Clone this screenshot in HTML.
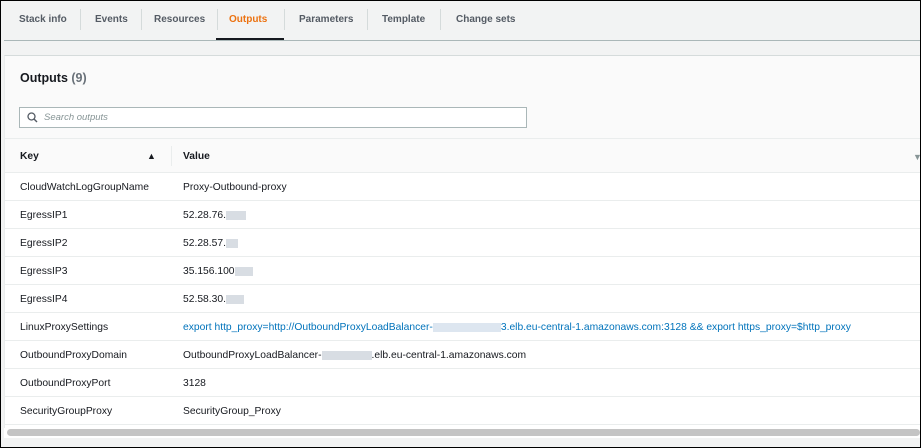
<!DOCTYPE html>
<html><head><meta charset="utf-8"><style>
*{box-sizing:border-box;margin:0;padding:0}
body{width:921px;height:448px;overflow:hidden;background:#f2f3f3;font-family:"Liberation Sans",sans-serif;font-size:11px;color:#16191f;position:relative}
.frame{position:absolute;left:0;top:0;width:921px;height:448px;border:1px solid #000;pointer-events:none;z-index:9}
.tabs{position:absolute;left:4px;top:0;right:0;height:41px;border-bottom:1px solid #aab7b8}
.tab{position:absolute;top:0;height:40px;line-height:40px;font-weight:bold;color:#545b64;font-size:10px}
.sep{position:absolute;top:9px;width:1px;height:21px;background:#d5dbdb}
.panel{position:absolute;left:4px;top:55px;width:930px;height:383px;background:#fff;border-top:1px solid #d5dbdb;border-left:1px solid #eaeded}
.head{position:absolute;left:0;top:0;right:0;height:82px;background:#fafafa}
h2{position:absolute;left:15px;top:15px;font-size:12.5px;font-weight:bold}
h2 span{color:#687078}
.search{position:absolute;left:14px;top:51px;width:508px;height:21px;border:1px solid #aab7b8;background:#fff;font-style:italic;color:#879596;font-size:9.5px;line-height:19px;padding-left:24px}
.search svg{position:absolute;left:7px;top:4px}
.thead{position:absolute;left:0;top:82px;right:0;height:35px;background:#fafafa;border-top:1px solid #eaeded;border-bottom:1px solid #eaeded;font-weight:bold;font-size:10.3px}
.row{position:absolute;left:0;right:0;height:28px;border-bottom:1px solid #eaeded;line-height:30px;font-size:10.3px}
.k{position:absolute;left:15px}.v{position:absolute;left:178px;white-space:nowrap}
.blur{display:inline-block;height:9px;background:#d8dde3;vertical-align:middle}
.lnk{color:#0073bb}
.sb{position:absolute;left:4px;top:428px;width:916px;height:10px;background:#fff}
.sb div{position:absolute;left:3px;top:1px;right:0;height:7px;background:#c4c4c4;border-radius:4px}
</style></head><body>
<div class="tabs">
<div class="tab" style="left:15px">Stack info</div><div class="sep" style="left:76px"></div>
<div class="tab" style="left:91px">Events</div><div class="sep" style="left:137px"></div>
<div class="tab" style="left:150px">Resources</div><div class="sep" style="left:213px"></div>
<div class="tab" style="left:225px;color:#ec7211">Outputs</div><div style="position:absolute;left:212px;top:38px;width:68px;height:2px;background:#16191f"></div><div class="sep" style="left:280px"></div>
<div class="tab" style="left:295px">Parameters</div><div class="sep" style="left:363px"></div>
<div class="tab" style="left:378px">Template</div><div class="sep" style="left:436px"></div>
<div class="tab" style="left:452px">Change sets</div>
</div>
<div class="panel">
<div class="head"></div>
<h2>Outputs <span>(9)</span></h2>
<div class="search"><svg width="11" height="11" viewBox="0 0 11 11"><circle cx="4.5" cy="4.5" r="3.5" fill="none" stroke="#545b64" stroke-width="1.3"/><path d="M7 7L10 10" stroke="#545b64" stroke-width="1.4"/></svg>Search outputs</div>
<div class="thead">
<span style="position:absolute;left:15px;top:12px">Key</span>
<span style="position:absolute;left:142px;top:12px;font-size:9px">▲</span>
<div style="position:absolute;left:166px;top:7px;width:1px;height:20px;background:#eaeded"></div>
<span style="position:absolute;left:178px;top:12px">Value</span>
<span style="position:absolute;left:908px;top:13px;font-size:9px;color:#879596">▼</span>
</div>
<div class="row" style="top:117px"><span class="k">CloudWatchLogGroupName</span><span class="v">Proxy-Outbound-proxy</span></div>
<div class="row" style="top:145px"><span class="k">EgressIP1</span><span class="v">52.28.76.<span class="blur" style="width:20px"></span></span></div>
<div class="row" style="top:173px"><span class="k">EgressIP2</span><span class="v">52.28.57.<span class="blur" style="width:12px"></span></span></div>
<div class="row" style="top:201px"><span class="k">EgressIP3</span><span class="v">35.156.100<span class="blur" style="width:18px"></span></span></div>
<div class="row" style="top:229px"><span class="k">EgressIP4</span><span class="v">52.58.30.<span class="blur" style="width:18px"></span></span></div>
<div class="row" style="top:257px"><span class="k">LinuxProxySettings</span><span class="v lnk">export http_proxy=http://OutboundProxyLoadBalancer-<span class="blur" style="width:68px;background:#dde6f0"></span>3.elb.eu-central-1.amazonaws.com:3128 &amp;&amp; export https_proxy=$http_proxy</span></div>
<div class="row" style="top:285px"><span class="k">OutboundProxyDomain</span><span class="v">OutboundProxyLoadBalancer-<span class="blur" style="width:50px"></span>.elb.eu-central-1.amazonaws.com</span></div>
<div class="row" style="top:313px"><span class="k">OutboundProxyPort</span><span class="v">3128</span></div>
<div class="row" style="top:341px"><span class="k">SecurityGroupProxy</span><span class="v">SecurityGroup_Proxy</span></div>
</div>
<div class="sb"><div></div></div>
<div class="frame"></div>
</body></html>
